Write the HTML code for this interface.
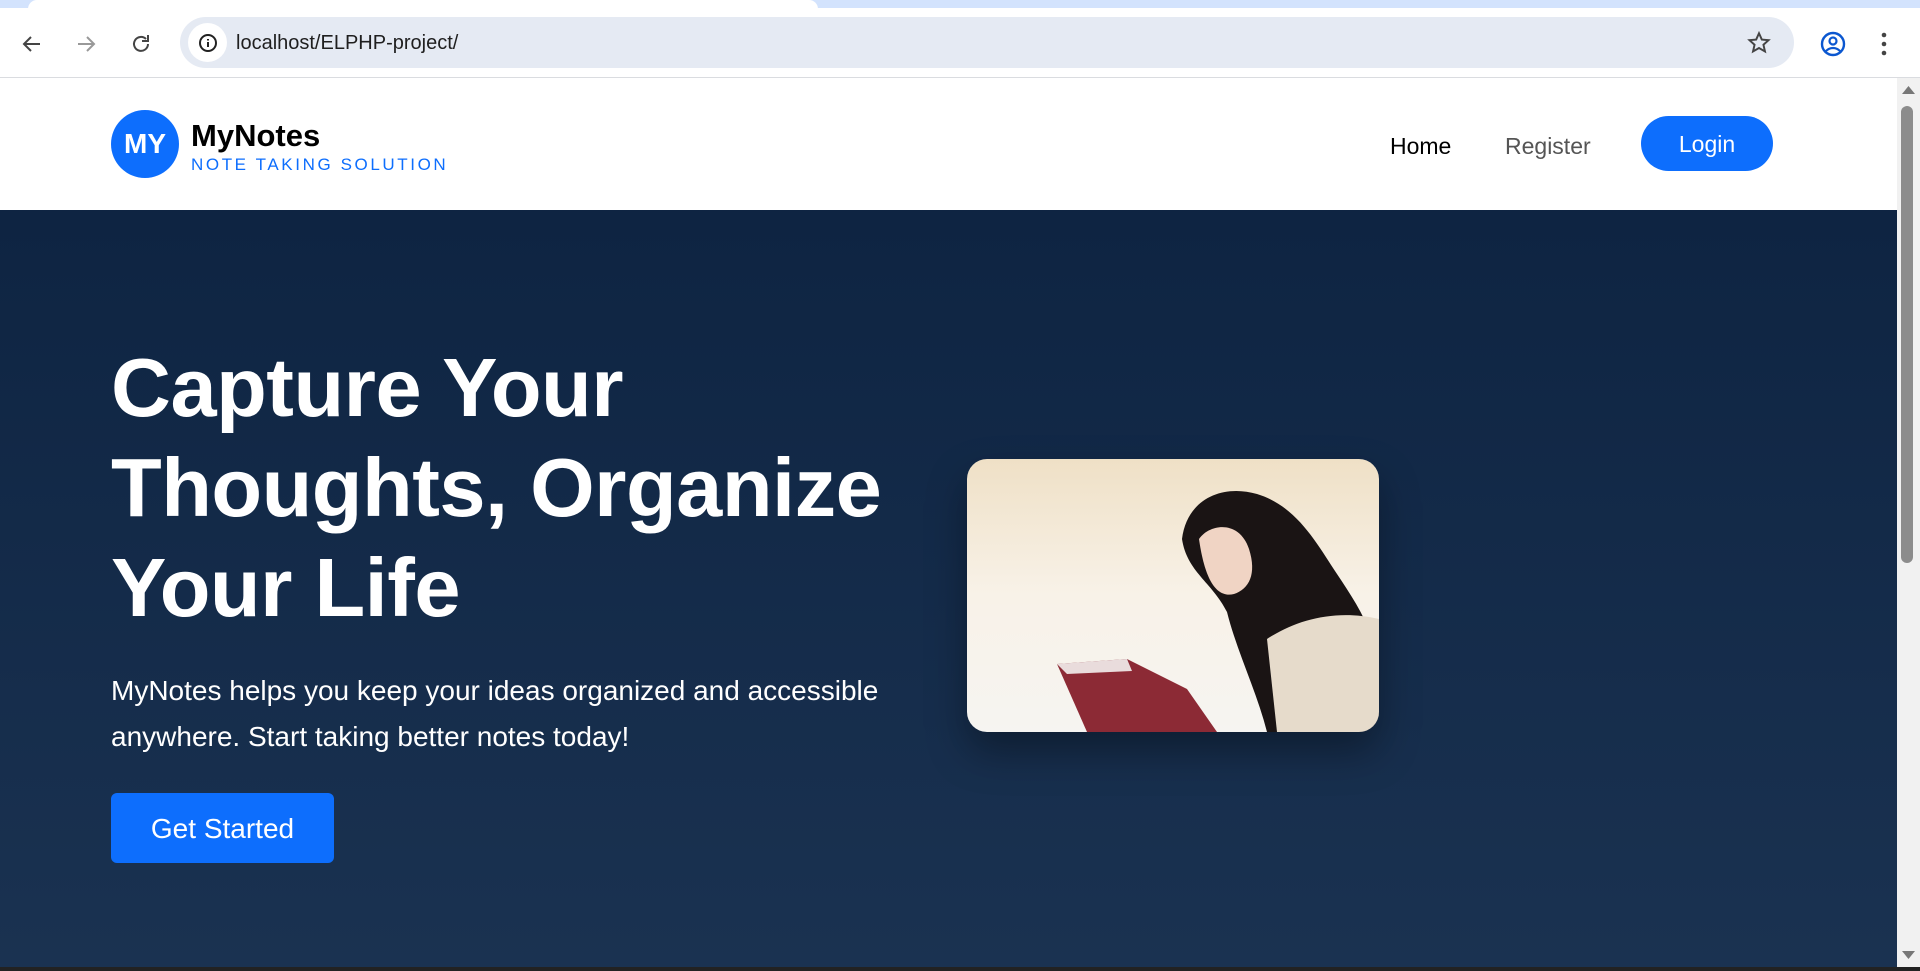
<!DOCTYPE html>
<html><head><meta charset="utf-8"><style>
*{margin:0;padding:0;box-sizing:border-box}
body{width:1920px;height:971px;overflow:hidden;font-family:"Liberation Sans",sans-serif;background:#fff;position:relative}
.tabs{position:absolute;left:0;top:0;width:1920px;height:9px;background:#d3e3fd}
.tabs .t{position:absolute;left:28px;top:0;width:790px;height:9px;background:#fff;border-radius:10px 10px 0 0}
.bar{position:absolute;left:0;top:8px;width:1920px;height:70px;background:#fff;border-bottom:1px solid #dadce0}
.url{position:absolute;left:180px;top:9px;width:1614px;height:51px;background:#e5eaf3;border-radius:26px}
.url .i{position:absolute;left:8px;top:6px;width:39px;height:39px;background:#fff;border-radius:50%}
.url span{position:absolute;left:56px;top:15px;font-size:20px;color:#1f1f1f}
.hdr{position:absolute;left:0;top:78px;width:1897px;height:132px;background:#fff}
.logo{position:absolute;left:111px;top:32px;width:68px;height:68px;border-radius:50%;background:#0d6efd;color:#fff;font-weight:bold;font-size:28px;text-align:center;line-height:68px}
.brand{position:absolute;left:191px;top:40px;font-size:31px;font-weight:bold;color:#000}
.sub{position:absolute;left:191px;top:77px;font-size:17px;letter-spacing:2.6px;color:#0d6efd}
.nav{position:absolute;top:55px;font-size:23px}
.login{position:absolute;left:1641px;top:38px;width:132px;height:55px;border-radius:28px;background:#0d6efd;color:#fff;font-size:23px;text-align:center;line-height:57px}
.hero{position:absolute;left:0;top:210px;width:1897px;height:757px;background:linear-gradient(#0e2442,#1a3251)}
h1{position:absolute;left:111px;top:128px;color:#fff;font-size:83px;line-height:100px;font-weight:bold;letter-spacing:-0.5px}
p{position:absolute;left:111px;top:458px;width:820px;color:#fff;font-size:28px;line-height:46px;font-weight:300}
.gs{position:absolute;left:111px;top:583px;width:223px;height:70px;background:#0d6efd;border-radius:6px;color:#fff;font-size:28px;text-align:center;line-height:72px}
.img{position:absolute;left:967px;top:249px;width:412px;height:273px;border-radius:20px;overflow:hidden;box-shadow:0 20px 40px rgba(0,0,0,.35)}
.sb{position:absolute;left:1897px;top:78px;width:23px;height:889px;background:#f1f1f1}
.thumb{position:absolute;left:4px;top:28px;width:12px;height:457px;background:#8c8c8c;border-radius:6px}
.bot{position:absolute;left:0;top:967px;width:1920px;height:4px;background:#222}
</style></head><body>
<div class="tabs"><div class="t"></div></div>
<div class="bar">
<svg style="position:absolute;left:20px;top:24px" width="24" height="24" viewBox="0 0 24 24"><path d="M20 12H5M11 5l-7 7 7 7" fill="none" stroke="#444" stroke-width="2"/></svg>
<svg style="position:absolute;left:74px;top:24px" width="24" height="24" viewBox="0 0 24 24"><path d="M4 12h15M13 5l7 7-7 7" fill="none" stroke="#999" stroke-width="2"/></svg>
<svg style="position:absolute;left:129px;top:24px" width="24" height="24" viewBox="0 0 24 24"><path d="M19 12a7 7 0 1 1-2-5" fill="none" stroke="#444" stroke-width="2"/><path d="M19 3v6h-6" fill="none" stroke="#444" stroke-width="2"/></svg>
<div class="url"><div class="i"><svg style="position:absolute;left:10px;top:10px" width="20" height="20" viewBox="0 0 20 20"><circle cx="10" cy="10" r="8" fill="none" stroke="#222" stroke-width="2"/><path d="M10 9v5M10 6v1.5" stroke="#222" stroke-width="2"/></svg></div><span>localhost/ELPHP-project/</span>
<svg style="position:absolute;left:1566px;top:13px" width="26" height="26" viewBox="0 0 24 24"><path d="M12 3l2.6 5.8 6.2.6-4.7 4.2 1.4 6.2L12 16.6 6.5 19.8l1.4-6.2-4.7-4.2 6.2-.6z" fill="none" stroke="#444" stroke-width="1.8"/></svg></div>
<svg style="position:absolute;left:1819px;top:22px" width="28" height="28" viewBox="0 0 28 28"><circle cx="14" cy="14" r="11" fill="none" stroke="#0b57d0" stroke-width="2.4"/><circle cx="14" cy="11" r="3.5" fill="none" stroke="#0b57d0" stroke-width="2.2"/><path d="M7 21c4-4 10-4 14 0" fill="none" stroke="#0b57d0" stroke-width="2.2"/></svg>
<svg style="position:absolute;left:1880px;top:22px" width="8" height="28" viewBox="0 0 8 28"><circle cx="4" cy="5" r="2.3" fill="#444"/><circle cx="4" cy="14" r="2.3" fill="#444"/><circle cx="4" cy="23" r="2.3" fill="#444"/></svg>
</div>
<div class="hdr">
<div class="logo">MY</div>
<div class="brand">MyNotes</div>
<div class="sub">NOTE TAKING SOLUTION</div>
<div class="nav" style="left:1390px;color:#000">Home</div>
<div class="nav" style="left:1505px;color:#555">Register</div>
<div class="login">Login</div>
</div>
<div class="hero">
<h1>Capture Your<br>Thoughts, Organize<br>Your Life</h1>
<p>MyNotes helps you keep your ideas organized and accessible anywhere. Start taking better notes today!</p>
<div class="gs">Get Started</div>
<div class="img"><svg width="412" height="273" viewBox="0 0 412 273">
<defs><linearGradient id="g" x1="0" y1="0" x2="0" y2="1"><stop offset="0" stop-color="#efe0c6"/><stop offset=".5" stop-color="#f8f2e8"/><stop offset="1" stop-color="#f6f4f1"/></linearGradient></defs>
<rect width="412" height="273" fill="url(#g)"/>
<path d="M215 80c5-40 40-55 75-45 40 12 60 50 80 80 20 30 40 60 42 100v58H300c-10-40-30-80-40-120-15-30-40-40-45-73z" fill="#1a1414"/>
<path d="M232 80c10-15 40-20 50 10 8 25 0 40-15 45-20 5-30-20-35-55z" fill="#f0d4c4"/>
<path d="M300 180c30-20 70-30 112-20v113H310z" fill="#e6dbcb"/>
<path d="M90 205l70-5 60 30 30 43H120z" fill="#8c2a35"/>
<path d="M90 205l70-5 5 12-65 3z" fill="#e9dcdc"/>
</svg></div>
</div>
<div class="sb"><div class="thumb"></div>
<svg style="position:absolute;left:5px;top:8px" width="13" height="8"><path d="M0 8L6.5 0 13 8z" fill="#777"/></svg>
<svg style="position:absolute;left:5px;top:873px" width="13" height="8"><path d="M0 0L6.5 8 13 0z" fill="#777"/></svg></div>
<div class="bot"></div>
</body></html>
